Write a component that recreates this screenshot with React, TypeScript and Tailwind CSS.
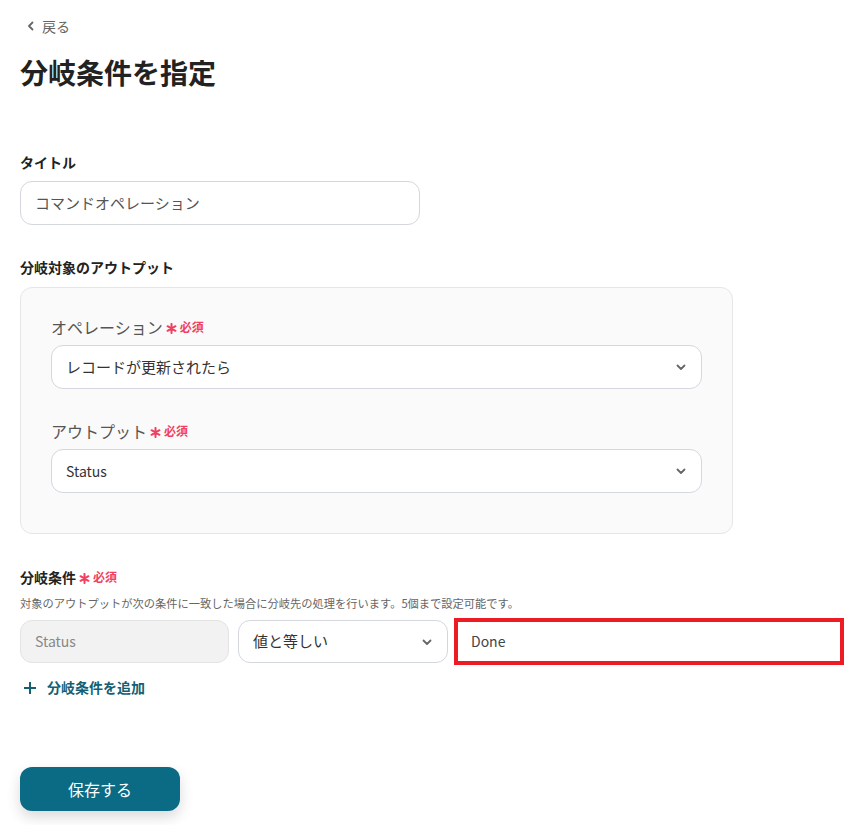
import React from "react";

const Chevron = () => (
  <svg width="12" height="12" viewBox="0 0 12 12" fill="none" stroke="#666" strokeWidth="1.8" strokeLinecap="round" strokeLinejoin="round">
    <path d="M2.5 4.5 L6 8 L9.5 4.5" />
  </svg>
);

const Required = () => (
  <span className="ml-[3px] inline-flex items-center text-[12px] font-bold text-[#f0405f]">
    <svg width="11" height="11" viewBox="0 0 12 12" className="mr-[3px] mt-[3px]" stroke="#f0405f" strokeWidth="2.2" strokeLinecap="round">
      <path d="M6 1 V11 M1.7 3.5 L10.3 8.5 M1.7 8.5 L10.3 3.5" />
    </svg>
    必須
  </span>
);

export default function App() {
  return (
    <div className="min-h-[825px] w-[868px] bg-white font-['Noto_Sans_CJK_JP','Noto_Sans',sans-serif] text-[#222]">
      <div className="pl-5 pt-[16px]">
        <div className="flex items-center gap-[6px] pl-[6px] text-[14px] text-[#666] h-[20px]">
          <svg width="10" height="10" viewBox="0 0 10 10" fill="none" stroke="#666" strokeWidth="1.8" strokeLinecap="round" strokeLinejoin="round">
            <path d="M6.5 1.5 L3 5 L6.5 8.5" />
          </svg>
          <span>戻る</span>
        </div>
        <h1 className="mt-[16px] text-[28px] font-bold leading-[40px] text-[#222]">分岐条件を指定</h1>

        <div className="mt-[60px] text-[14px] font-bold leading-[20px]">タイトル</div>
        <div className="mt-[9px] flex h-[44px] w-[400px] items-center rounded-[12px] border border-[#d4d7dd] px-[14px] text-[15px] text-[#555]">
          コマンドオペレーション
        </div>

        <div className="mt-[32px] text-[14px] font-bold leading-[20px]">分岐対象のアウトプット</div>
        <div className="mt-[10px] w-[713px] rounded-[12px] border border-[#e6e6e6] bg-[#fafafa] px-[30px] pt-[28px] pb-[40px]">
          <div className="flex items-center text-[16px] leading-[22px] text-[#555]">
            オペレーション<Required />
          </div>
          <div className="mt-[7px] flex h-[44px] items-center justify-between rounded-[12px] border border-[#d4d7dd] bg-white pl-[14px] pr-[14px] text-[15px] text-[#333]">
            <span>レコードが更新されたら</span>
            <Chevron />
          </div>
          <div className="mt-[31px] flex items-center text-[16px] leading-[22px] text-[#555]">
            アウトプット<Required />
          </div>
          <div className="mt-[7px] flex h-[44px] items-center justify-between rounded-[12px] border border-[#d4d7dd] bg-white pl-[14px] pr-[14px] text-[14px] text-[#333]">
            <span>Status</span>
            <Chevron />
          </div>
        </div>

        <div className="mt-[33px] flex items-center text-[14px] font-bold leading-[20px]">
          分岐条件<Required />
        </div>
        <div className="mt-[8px] text-[11.25px] leading-[16px] text-[#666]">
          対象のアウトプットが次の条件に一致した場合に分岐先の処理を行います。5個まで設定可能です。
        </div>
        <div className="mt-[7px] flex items-center">
          <div className="flex h-[43px] w-[209px] items-center rounded-[12px] border border-[#e3e3e3] bg-[#f2f2f2] px-[14px] text-[14px] text-[#888]">
            Status
          </div>
          <div className="ml-[9px] flex h-[43px] w-[210px] items-center justify-between rounded-[12px] border border-[#d4d7dd] bg-white px-[14px] text-[15px] text-[#333]">
            <span>値と等しい</span>
            <Chevron />
          </div>
          <div className="ml-[6px] flex h-[47px] w-[390px] items-center border-[4px] border-[#ed1c24] bg-white pl-[13px] text-[14px] text-[#444]">
            Done
          </div>
        </div>

        <div className="mt-[12px] flex items-center gap-[10px] pl-[3px] text-[14px] font-bold text-[#135f74]">
          <svg width="14" height="14" viewBox="0 0 14 14" fill="none" stroke="#135f74" strokeWidth="2">
            <path d="M7 1 V13 M1 7 H13" />
          </svg>
          <span>分岐条件を追加</span>
        </div>

        <button className="mt-[69px] flex h-[44px] w-[160px] items-center justify-center rounded-[12px] bg-[#0b6a84] text-[16px] text-white shadow-[0_6px_14px_rgba(0,0,0,0.15)]">
          保存する
        </button>
      </div>
    </div>
  );
}
